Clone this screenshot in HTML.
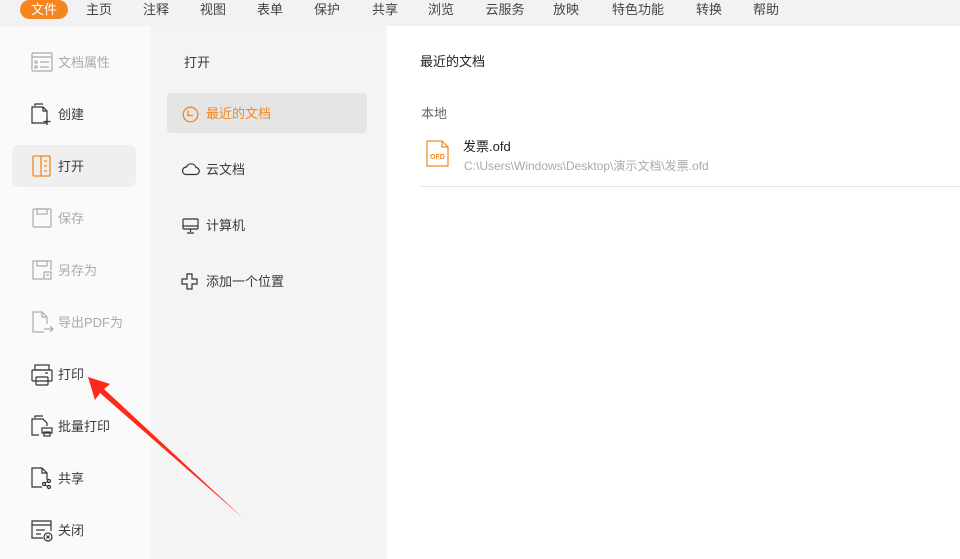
<!DOCTYPE html>
<html><head><meta charset="utf-8"><style>
*{margin:0;padding:0;box-sizing:border-box}
body{width:960px;height:559px;overflow:hidden;background:#fff;font-family:"Liberation Sans","Noto Sans CJK SC",sans-serif;position:relative;color:#3a3a3a}
.top{position:absolute;left:0;top:0;width:960px;height:26px;background:#f2f2f2}
.top span{position:absolute;top:1px;font-size:13px;color:#444;line-height:17px;transform:translateX(-50%);white-space:nowrap}
.pill{position:absolute;left:20px;top:0;width:48px;height:19px;border-radius:10px;background:#f5861f}
.left{position:absolute;left:0;top:26px;width:151px;height:533px;background:#fafafa}
.mid{position:absolute;left:151px;top:26px;width:236px;height:533px;background:#f4f4f4}
.t{position:absolute;font-size:13px;line-height:16px;white-space:nowrap}
svg.i{position:absolute}
</style></head><body>
<div class="top"></div>
<div class="pill"></div>
<div class="top" style="background:none">
<span style="left:44px;color:#fff">文件</span>
<span style="left:99px">主页</span><span style="left:156px">注释</span><span style="left:213px">视图</span><span style="left:270px">表单</span><span style="left:327px">保护</span><span style="left:385px">共享</span><span style="left:441px">浏览</span><span style="left:505px">云服务</span><span style="left:566px">放映</span><span style="left:638px">特色功能</span><span style="left:709px">转换</span><span style="left:766px">帮助</span>
</div>
<div class="left"></div>
<div class="mid"></div>
<div style="position:absolute;left:12px;top:145px;width:124px;height:42px;border-radius:6px;background:#efefef"></div>
<div style="position:absolute;left:167px;top:93px;width:200px;height:40px;border-radius:4px;background:#e5e5e5"></div>

<svg class="i" style="left:31px;top:52px" width="22" height="20" fill="none" stroke="#aaa" stroke-width="1.2"><rect x="1" y="1" width="20" height="18" rx="1"/><line x1="1" y1="5" x2="21" y2="5"/><circle cx="5" cy="10" r="1.2"/><circle cx="5" cy="15" r="1.2"/><line x1="9" y1="10" x2="18" y2="10"/><line x1="9" y1="15" x2="18" y2="15"/></svg>
<div class="t" style="left:58px;top:55px;color:#aaa">文档属性</div>

<svg class="i" style="left:31px;top:103px" width="22" height="23" fill="none" stroke="#333" stroke-width="1.2"><path d="M4 3V1h8"/><path d="M1 4h11l4 4v12H1z"/><path d="M12 4v4h4"/><path d="M16 15v7M12.5 18.5h7"/></svg>
<div class="t" style="left:58px;top:107px">创建</div>

<svg class="i" style="left:32px;top:155px" width="20" height="22" fill="none" stroke="#f5861f" stroke-width="1.3"><rect x="1" y="1" width="17" height="20" rx="1"/><line x1="9" y1="1" x2="9" y2="21"/><line x1="12" y1="6" x2="15" y2="6"/><line x1="12" y1="11" x2="15" y2="11"/><line x1="12" y1="16" x2="15" y2="16"/></svg>
<div class="t" style="left:58px;top:159px">打开</div>

<svg class="i" style="left:32px;top:208px" width="20" height="20" fill="none" stroke="#aaa" stroke-width="1.2"><rect x="1" y="1" width="18" height="18" rx="1"/><rect x="5" y="1" width="10" height="5"/></svg>
<div class="t" style="left:58px;top:211px;color:#aaa">保存</div>

<svg class="i" style="left:32px;top:260px" width="20" height="20" fill="none" stroke="#aaa" stroke-width="1.2"><path d="M11 19H1V1h18v9"/><rect x="5" y="1" width="10" height="5"/><rect x="12" y="12" width="7" height="7"/><line x1="14" y1="15" x2="17" y2="15"/></svg>
<div class="t" style="left:58px;top:263px;color:#aaa">另存为</div>

<svg class="i" style="left:32px;top:311px" width="22" height="23" fill="none" stroke="#aaa" stroke-width="1.2"><path d="M15 13V6l-5-5H1v20h11"/><path d="M10 1v5h5"/><path d="M12 18h9M18 15l3 3-3 3"/></svg>
<div class="t" style="left:58px;top:315px;color:#aaa">导出PDF为</div>

<svg class="i" style="left:31px;top:364px" width="22" height="22" fill="none" stroke="#333" stroke-width="1.2"><rect x="4" y="1" width="14" height="5"/><rect x="1" y="6" width="20" height="11" rx="1"/><rect x="5" y="13" width="12" height="8" rx="1"/><line x1="14" y1="9" x2="17" y2="9"/></svg>
<div class="t" style="left:58px;top:367px">打印</div>

<svg class="i" style="left:31px;top:415px" width="23" height="23" fill="none" stroke="#333" stroke-width="1.2"><path d="M4 3V1h8"/><path d="M8 20H1V4h11l4 4v3"/><rect x="11" y="13" width="10" height="5"/><rect x="13" y="17" width="6" height="4"/></svg>
<div class="t" style="left:58px;top:419px">批量打印</div>

<svg class="i" style="left:31px;top:467px" width="23" height="23" fill="none" stroke="#333" stroke-width="1.2"><path d="M11 20H1V1h10l5 5v7"/><path d="M11 1v5h5"/><circle cx="18" cy="14" r="1.5"/><circle cx="13" cy="17" r="1.5"/><circle cx="18" cy="20" r="1.5"/><path d="M14 16l3-1.5M14 18l3 1.5"/></svg>
<div class="t" style="left:58px;top:471px">共享</div>

<svg class="i" style="left:31px;top:520px" width="23" height="22" fill="none" stroke="#333" stroke-width="1.2"><path d="M12 18H1V1h19v10"/><line x1="1" y1="5" x2="20" y2="5"/><line x1="5" y1="10" x2="14" y2="10"/><line x1="5" y1="14" x2="10" y2="14"/><circle cx="17" cy="17" r="4"/><path d="M15.5 15.5l3 3M18.5 15.5l-3 3"/></svg>
<div class="t" style="left:58px;top:523px">关闭</div>

<div class="t" style="left:184px;top:55px">打开</div>
<svg class="i" style="left:182px;top:106px" width="17" height="17" fill="none" stroke="#f5861f" stroke-width="1.3"><circle cx="8.5" cy="8.5" r="7.3"/><path d="M6 4.5v5h5"/></svg>
<div class="t" style="left:206px;top:106px;color:#f5861f">最近的文档</div>
<svg class="i" style="left:181px;top:162px" width="19" height="14" fill="none" stroke="#333" stroke-width="1.2"><path d="M4.5 12.5h10a3.5 3.5 0 0 0 .5-7A5 5 0 0 0 5.5 5 3.8 3.8 0 0 0 4.5 12.5z"/></svg>
<div class="t" style="left:206px;top:162px">云文档</div>
<svg class="i" style="left:182px;top:218px" width="17" height="17" fill="none" stroke="#333" stroke-width="1.2"><rect x="1" y="1" width="15" height="10" rx="1"/><line x1="1" y1="8" x2="16" y2="8"/><path d="M8.5 11v3M5 15h7"/></svg>
<div class="t" style="left:206px;top:218px">计算机</div>
<svg class="i" style="left:181px;top:273px" width="17" height="17" fill="none" stroke="#333" stroke-width="1.2"><path d="M6 1h5v5h5v5h-5v5H6v-5H1V6h5z"/></svg>
<div class="t" style="left:206px;top:274px">添加一个位置</div>

<div class="t" style="left:420px;top:54px;color:#222">最近的文档</div>
<div class="t" style="left:421px;top:106px;color:#666">本地</div>
<svg class="i" style="left:426px;top:140px" width="24" height="28" fill="none" stroke="#f5861f" stroke-width="1.2"><path d="M1 1h15l6 6v19H1z"/><path d="M16 1v6h6"/><text x="4" y="19" font-size="7" fill="#f5861f" stroke="none" font-family="Liberation Sans" font-weight="bold">OFD</text></svg>
<div class="t" style="left:463px;top:139px;color:#222">发票.ofd</div>
<div class="t" style="left:464px;top:158px;color:#aaa;font-size:12px">C:\Users\Windows\Desktop\演示文档\发票.ofd</div>
<div style="position:absolute;left:421px;top:186px;width:539px;height:1px;background:#e3e3e3"></div>

<svg class="i" style="left:0;top:0" width="960" height="559"><path d="M88 377L110 384L104 389L243 518L100 393L95 400Z" fill="#ff2a1a"/></svg>
</body></html>
